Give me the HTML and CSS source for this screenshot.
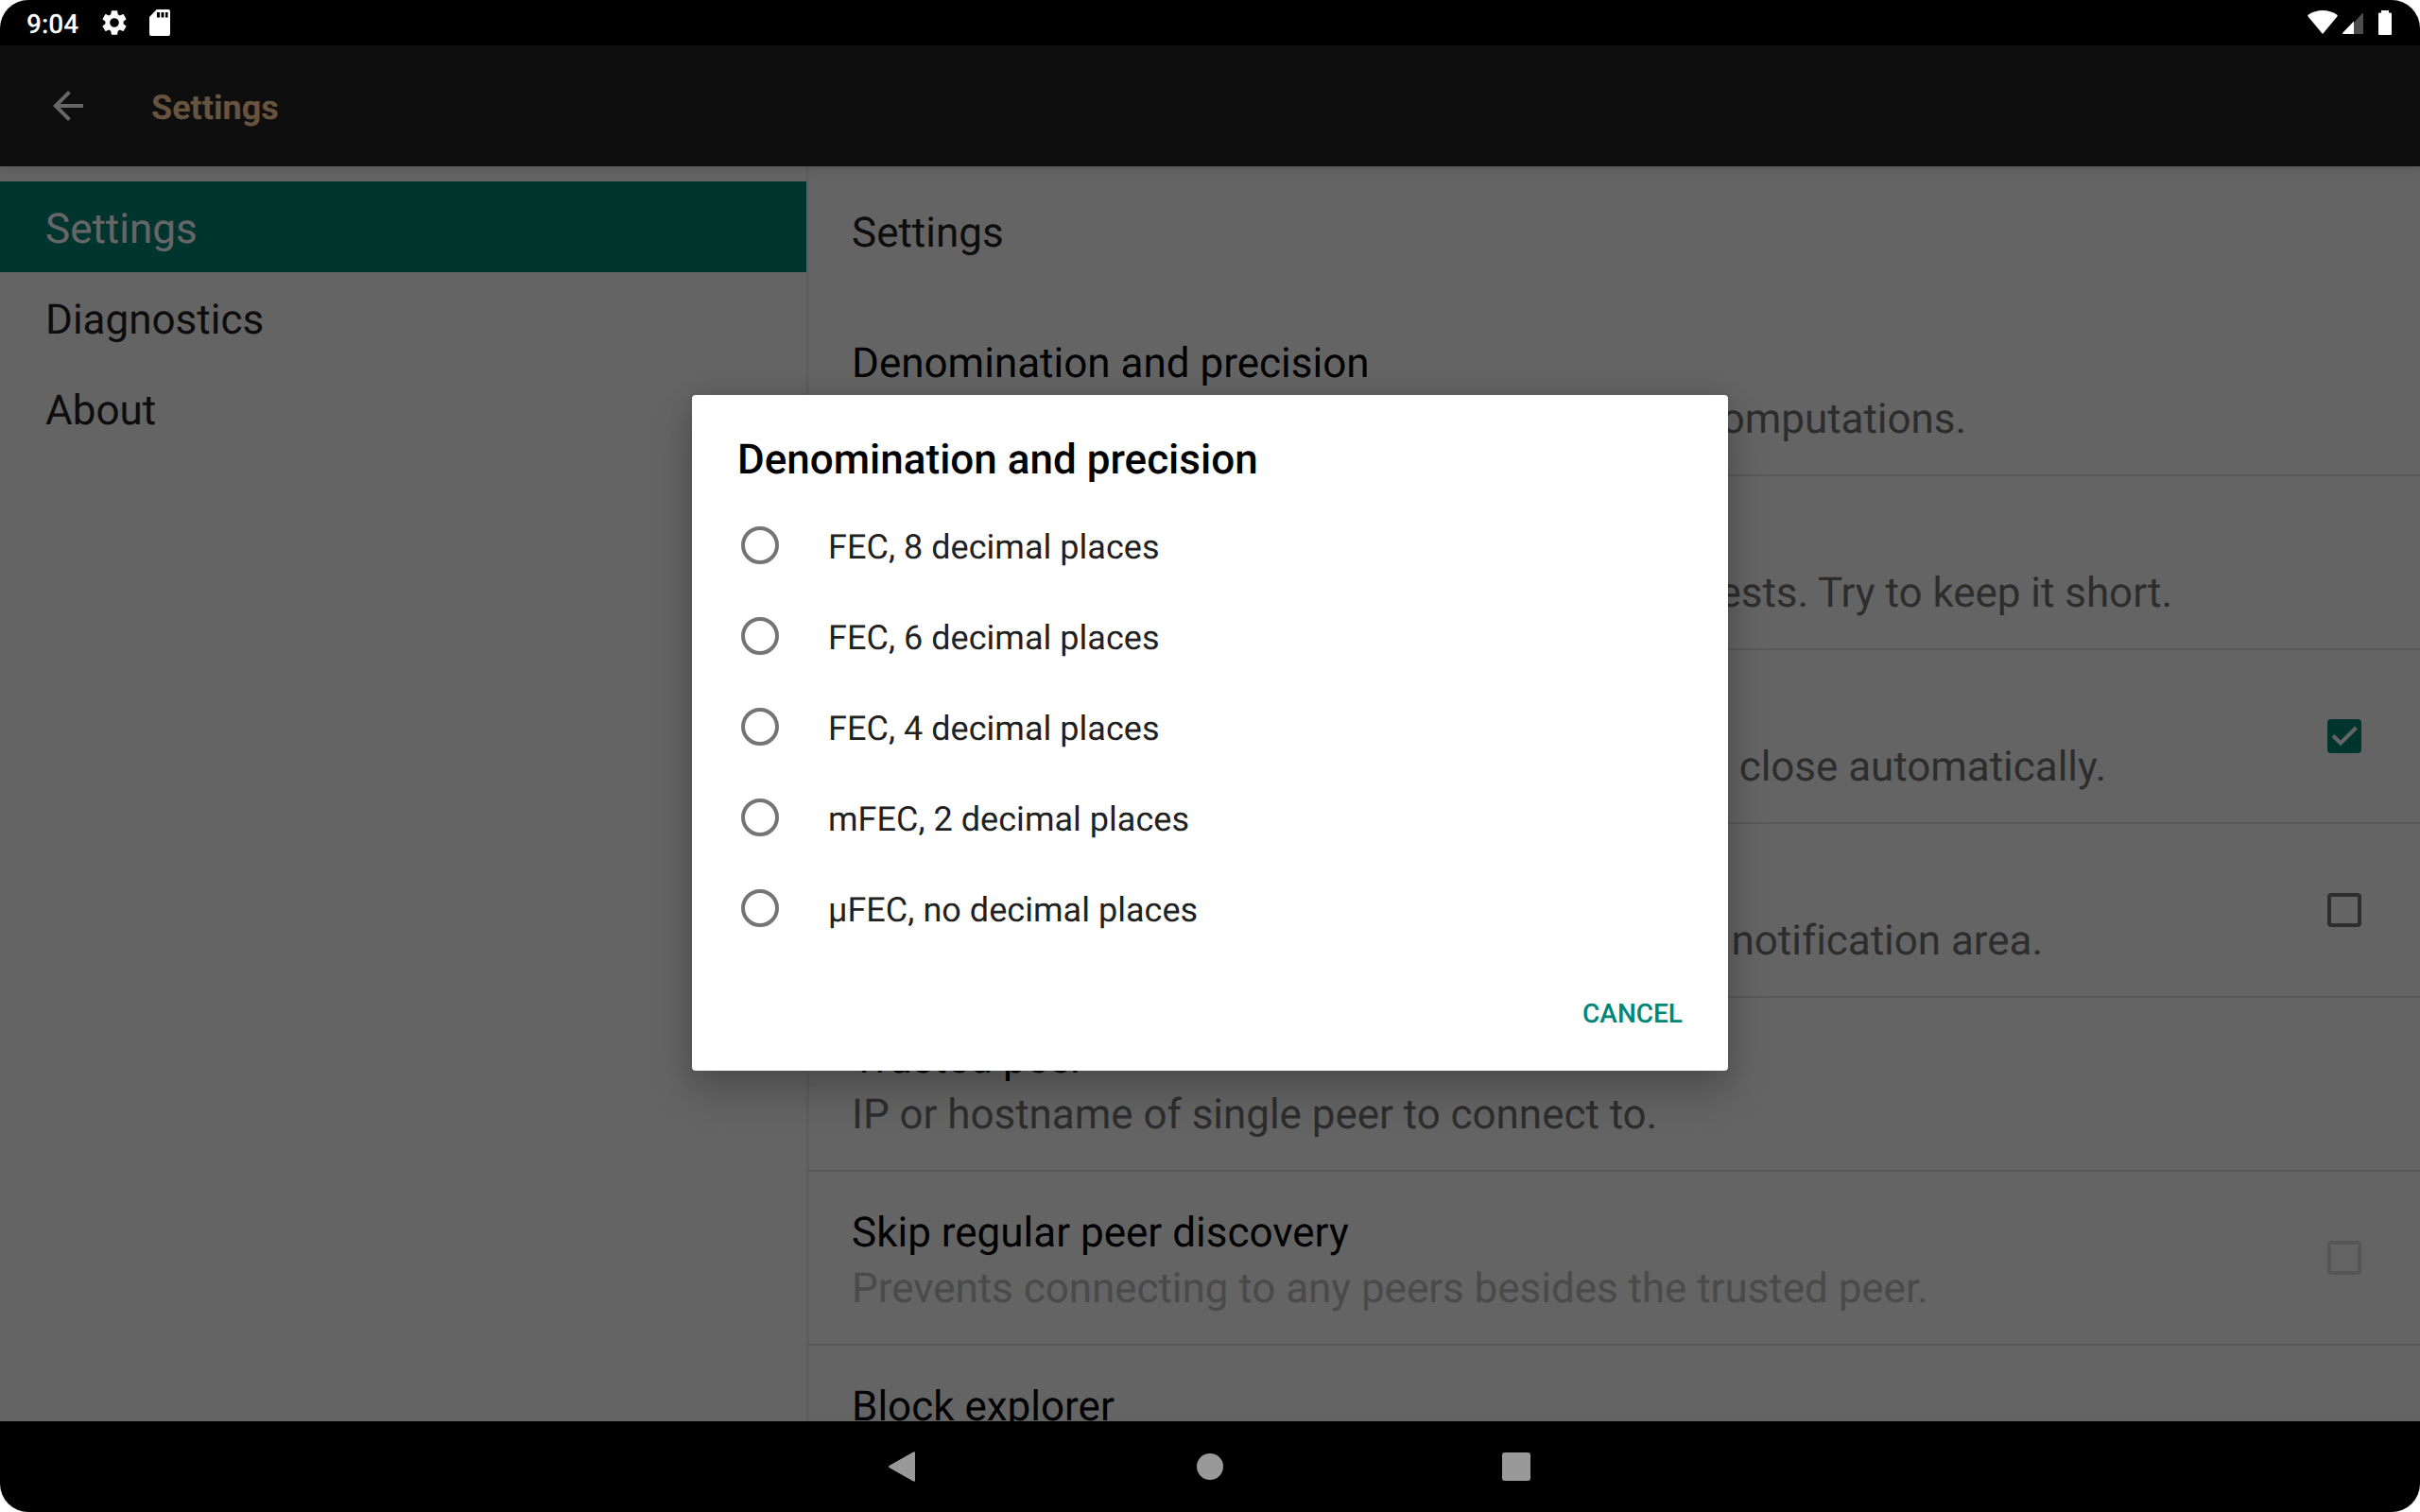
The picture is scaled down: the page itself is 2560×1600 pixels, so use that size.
FILE: index.html
```html
<!DOCTYPE html>
<html lang="en">
<head>
<meta charset="utf-8">
<title>Settings</title>
<link rel="stylesheet" href="styles.css">
</head>
<body>
<div class="device">
  <header class="status-bar">
    <span class="clock">9:04</span>
    <svg class="status-gear" viewBox="0 0 24 24"><path fill="#fff" d="M19.14 12.94c.04-.3.06-.61.06-.94s-.02-.64-.07-.94l2.03-1.58c.18-.14.23-.41.12-.61l-1.92-3.32c-.12-.22-.37-.29-.59-.22l-2.39.96c-.5-.38-1.03-.7-1.62-.94l-.36-2.54c-.04-.24-.24-.41-.48-.41h-3.84c-.24 0-.43.17-.47.41l-.36 2.54c-.59.24-1.13.57-1.62.94l-2.39-.96c-.22-.08-.47 0-.59.22L2.74 8.87c-.12.21-.08.47.12.61l2.03 1.58c-.05.3-.09.63-.09.94s.02.64.07.94l-2.03 1.58c-.18.14-.23.41-.12.61l1.92 3.32c.12.22.37.29.59.22l2.39-.96c.5.38 1.03.7 1.62.94l.36 2.54c.05.24.24.41.48.41h3.84c.24 0 .44-.17.47-.41l.36-2.54c.59-.24 1.13-.56 1.62-.94l2.39.96c.22.08.47 0 .59-.22l1.92-3.32c.12-.22.07-.47-.12-.61l-2.01-1.58zM12 15.6a3.6 3.6 0 1 1 0-7.2 3.6 3.6 0 0 1 0 7.2z"/></svg>
    <svg class="status-card" viewBox="0 0 22 28"><path fill="#fff" fill-rule="evenodd" d="M7.700 0H20q2 0 2 2v24q0 2-2 2H2q-2 0-2-2V8zM8 3v5.500h3V3zM12.500 3v5.500h3V3zM17 3v5.500h2.600V3z"/></svg>
    <svg class="status-wifi" viewBox="0 0 32 25"><path fill="#fff" d="M16 25 .6 6.600Q-.2 5.500 1 4.600 7.500 0 16 0t15 4.600q1.200.9.400 2z"/></svg>
    <svg class="status-cell" viewBox="0 0 22 22"><path fill="#4d4d4d" d="M12 22V10L20.500.5Q22-.5 22 1v21z"/><path fill="#fff" d="M12 8.500V22H1q-1.500-.3-.8-1.300z"/></svg>
    <svg class="status-battery" viewBox="0 0 14 26"><path fill="#fff" d="M3 0h8v2.500h2q1 0 1 1V25q0 1-1 1H1q-1 0-1-1V3.500q0-1 1-1h2z"/></svg>
  </header>

  <main class="app">
    <div class="toolbar">
      <svg class="back" viewBox="0 0 32 32"><path fill="#fff" d="M32 14H7.700L18.800 2.800 16 0 0 16l16 16 2.800-2.800L7.700 18H32z"/></svg>
      <h1 class="toolbar-title">Settings</h1>
    </div>
    <div class="panes">
      <nav class="headers">
        <div class="header-item selected">Settings</div>
        <div class="header-item">Diagnostics</div>
        <div class="header-item">About</div>
      </nav>
      <section class="prefs">
        <h2 class="crumb">Settings</h2>
        <div class="pref"><div class="pref-text"><div class="pref-title">Denomination and precision</div><div class="pref-summary w1">Display only. Does not affect any internal computations.</div></div></div>
        <div class="pref"><div class="pref-text"><div class="pref-title">Own name</div><div class="pref-summary w2">Your name to be shown in payment requests. Try to keep it short.</div></div></div>
        <div class="pref"><div class="pref-text"><div class="pref-title">Auto-close send coins dialog</div><div class="pref-summary w3">After payment has been sent, dialog will close automatically.</div></div>
          <svg class="check" viewBox="0 0 36 36"><rect width="36" height="36" rx="4" fill="#008577"/><path d="m6 17.500 8 8L30.500 9" fill="none" stroke="#fafafa" stroke-width="4"/></svg></div>
        <div class="pref"><div class="pref-text"><div class="pref-title">Connectivity indicator</div><div class="pref-summary w4">Connectivity will be displayed in the notification area.</div></div><span class="box"></span></div>
        <div class="pref"><div class="pref-text"><div class="pref-title">Trusted peer</div><div class="pref-summary">IP or hostname of single peer to connect to.</div></div></div>
        <div class="pref"><div class="pref-text"><div class="pref-title">Skip regular peer discovery</div><div class="pref-summary off">Prevents connecting to any peers besides the trusted peer.</div></div><span class="box off"></span></div>
        <div class="pref"><div class="pref-text"><div class="pref-title">Block explorer</div></div></div>
      </section>
    </div>
    <div class="scrim">
      <div class="dialog">
        <h3 class="dialog-title">Denomination and precision</h3>
        <div class="option"><span class="radio"></span><span class="label">FEC, 8 decimal places</span></div>
        <div class="option"><span class="radio"></span><span class="label">FEC, 6 decimal places</span></div>
        <div class="option"><span class="radio"></span><span class="label">FEC, 4 decimal places</span></div>
        <div class="option"><span class="radio"></span><span class="label">mFEC, 2 decimal places</span></div>
        <div class="option"><span class="radio"></span><span class="label">µFEC, no decimal places</span></div>
        <div class="actions"><span class="cancel">CANCEL</span></div>
      </div>
    </div>
  </main>

  <footer class="nav-bar">
    <svg viewBox="0 0 32 32"><path fill="#999" d="M28 1.500v29q0 2-1.800 1L.5 17q-1-1 0-2L26.200.5Q28-.5 28 1.500z"/></svg>
    <svg viewBox="0 0 32 32"><circle cx="16" cy="16" r="14" fill="#999"/></svg>
    <svg viewBox="0 0 32 32"><rect x="1" y="1" width="30" height="30" rx="3" fill="#999"/></svg>
  </footer>
</div>
</body>
</html>
```
FILE: styles.css
```css
* { box-sizing: border-box; }
body { margin: 0; background: #fff; font-family: Roboto, sans-serif; text-rendering: geometricPrecision; }
h1, h2, h3 { margin: 0; font-weight: 400; }
svg { display: block; flex: none; }

.device {
  width: 2560px; height: 1600px;
  display: flex; flex-direction: column;
  border-radius: 30px; overflow: hidden; background: #000;
}

.status-bar { height: 48px; flex: none; display: flex; align-items: flex-start; padding-left: 28px; }
.clock { width: 80px; font-size: 28px; font-weight: 500; line-height: 48px; color: #fff; padding-top: 2px; }
.status-gear { width: 32px; height: 32px; margin: 8px 0 0 -3px; }
.status-card { width: 22px; height: 28px; margin: 10px 0 0 21px; }
.status-wifi { width: 32px; height: 25px; margin: 11px 0 0 auto; }
.status-cell { width: 22px; height: 22px; margin: 14px 0 0 5px; }
.status-battery { width: 14px; height: 26px; margin: 11px 30px 0 16px; }

.app { position: relative; flex: 1; min-height: 0; display: flex; flex-direction: column; background: #fafafa; }
.toolbar {
  position: relative; height: 128px; flex: none;
  display: flex; align-items: center; padding-left: 56px;
  background: #232323; box-shadow: 0 2px 12px rgba(0,0,0,.15);
}
.back { width: 32px; height: 32px; }
.toolbar-title { margin: 4px 0 0 72px; font-size: 36px; font-weight: 700; line-height: 42px; color: #ffd29c; }

.panes { flex: 1; min-height: 0; display: flex; overflow: hidden; }
.headers { width: 853px; flex: none; padding-top: 16px; }
.header-item { height: 96px; padding: 2px 48px 0; font-size: 44px; line-height: 96px; color: #212121; }
.header-item.selected { background: #008577; color: #fff; }
.prefs { flex: 1; min-width: 0; box-shadow: inset 2px 0 3px rgba(0,0,0,.1); }
.crumb { height: 144px; padding: 44px 48px 0; font-size: 44px; line-height: 52px; color: #212121; }
.pref {
  height: 184px; display: flex; align-items: center; justify-content: space-between;
  padding: 0 62px 0 48px; border-bottom: 2px solid #dcdcdc;
}
.pref-text { height: 118px; padding-top: 3px; font-size: 44px; line-height: 59px; white-space: nowrap; color: #000; }
.pref-summary { color: #727272; letter-spacing: -.04px; }
.pref-summary.off { color: #b8b8b8; }
.w1, .w2, .w3, .w4 { text-align: right; }
.w1 { width: 1179px; }
.w2 { width: 1397px; }
.w3 { width: 1327px; }
.w4 { width: 1260px; }
.check { width: 36px; height: 36px; }
.box { width: 36px; height: 36px; flex: none; border: 4px solid #737373; border-radius: 4px; }
.box.off { border-color: #d8d8d8; }

.scrim { position: absolute; inset: 0; background: rgba(0,0,0,.6); display: flex; align-items: flex-start; justify-content: center; padding-top: 370px; }
.dialog {
  width: 1096px; height: 715px; background: #fff; border-radius: 4px;
  box-shadow: 0 24px 44px rgba(0,0,0,.2), 0 0 26px rgba(0,0,0,.12);
}
.dialog-title { height: 111px; padding: 42px 48px 0; font-size: 44px; font-weight: 500; line-height: 52px; color: #000; }
.option { height: 96px; display: flex; align-items: center; padding-left: 52px; }
.radio { width: 40px; height: 40px; border: 4px solid #757575; border-radius: 50%; }
.label { margin: 4px 0 0 52px; font-size: 36px; line-height: 42px; letter-spacing: .03px; color: #212121; }
.actions { display: flex; justify-content: flex-end; padding: 47px 48px 0; }
.cancel { font-size: 28px; font-weight: 500; line-height: 34px; color: #008577; }

.nav-bar { height: 96px; flex: none; display: flex; align-items: center; justify-content: center; gap: 292px; }
.nav-bar svg { width: 32px; height: 32px; }
```
